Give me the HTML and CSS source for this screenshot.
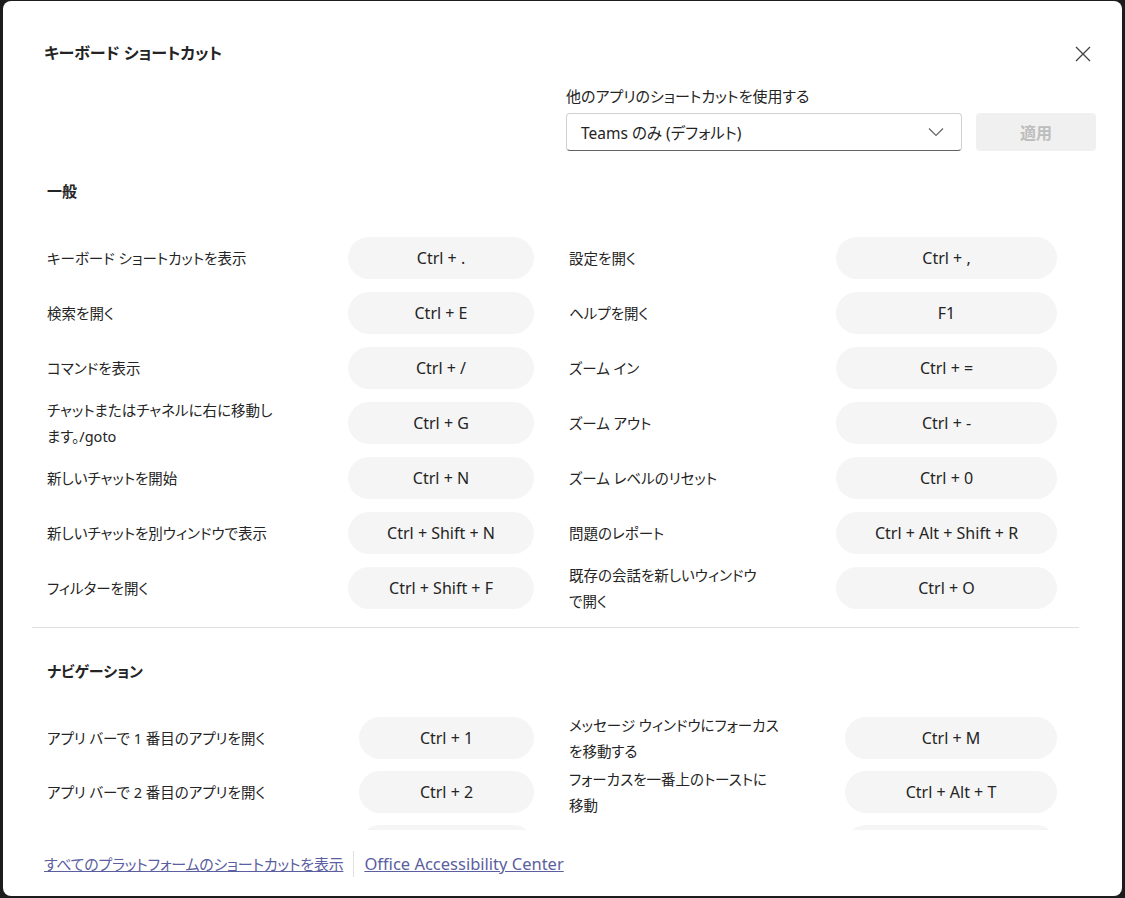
FILE: index.html
```html
<!DOCTYPE html>
<html lang="ja">
<head>
    <meta charset="UTF-8">
    <meta name="viewport" content="width=device-width, initial-scale=1.0">
    <title>キーボード ショートカット</title>
    <link rel="stylesheet" href="styles.css">
</head>
<body>
    <div class="dialog">
        <div class="header">
            <h1 class="title">キーボード ショートカット</h1>
            <button class="close" aria-label="閉じる">
                <svg width="16" height="16" viewBox="0 0 16 16"><path d="M1 1 L15 15 M15 1 L1 15" stroke="#424242" stroke-width="1.3" fill="none"/></svg>
            </button>
        </div>

        <div class="preset">
            <div class="preset-label">他のアプリのショートカットを使用する</div>
            <div class="preset-controls">
                <div class="select">
                    <span>Teams のみ (デフォルト)</span>
                    <svg width="16" height="10" viewBox="0 0 16 10"><path d="M1 1.5 L8 8.5 L15 1.5" stroke="#616161" stroke-width="1.1" fill="none"/></svg>
                </div>
                <button class="btn-apply" disabled>適用</button>
            </div>
        </div>

        <div class="scroll">
            <div class="section general">
                <h2>一般</h2>
                <div class="rows">
                    <div class="row">
                        <div class="item"><span class="label">キーボード ショートカットを表示</span><span class="key">Ctrl + .</span></div>
                        <div class="item"><span class="label">設定を開く</span><span class="key">Ctrl + ,</span></div>
                    </div>
                    <div class="row">
                        <div class="item"><span class="label">検索を開く</span><span class="key">Ctrl + E</span></div>
                        <div class="item"><span class="label">ヘルプを開く</span><span class="key">F1</span></div>
                    </div>
                    <div class="row">
                        <div class="item"><span class="label">コマンドを表示</span><span class="key">Ctrl + /</span></div>
                        <div class="item"><span class="label">ズーム イン</span><span class="key">Ctrl + =</span></div>
                    </div>
                    <div class="row">
                        <div class="item"><span class="label">チャットまたはチャネルに右に移動し<br>ます。/goto</span><span class="key">Ctrl + G</span></div>
                        <div class="item"><span class="label">ズーム アウト</span><span class="key">Ctrl + -</span></div>
                    </div>
                    <div class="row">
                        <div class="item"><span class="label">新しいチャットを開始</span><span class="key">Ctrl + N</span></div>
                        <div class="item"><span class="label">ズーム レベルのリセット</span><span class="key">Ctrl + 0</span></div>
                    </div>
                    <div class="row">
                        <div class="item"><span class="label">新しいチャットを別ウィンドウで表示</span><span class="key">Ctrl + Shift + N</span></div>
                        <div class="item"><span class="label">問題のレポート</span><span class="key">Ctrl + Alt + Shift + R</span></div>
                    </div>
                    <div class="row">
                        <div class="item"><span class="label">フィルターを開く</span><span class="key">Ctrl + Shift + F</span></div>
                        <div class="item"><span class="label">既存の会話を新しいウィンドウ<br>で開く</span><span class="key">Ctrl + O</span></div>
                    </div>
                </div>
            </div>

            <div class="section nav">
                <h2>ナビゲーション</h2>
                <div class="rows">
                    <div class="row">
                        <div class="item"><span class="label">アプリ バーで 1 番目のアプリを開く</span><span class="key">Ctrl + 1</span></div>
                        <div class="item"><span class="label">メッセージ ウィンドウにフォーカス<br>を移動する</span><span class="key">Ctrl + M</span></div>
                    </div>
                    <div class="row">
                        <div class="item"><span class="label">アプリ バーで 2 番目のアプリを開く</span><span class="key">Ctrl + 2</span></div>
                        <div class="item"><span class="label">フォーカスを一番上のトーストに<br>移動</span><span class="key">Ctrl + Alt + T</span></div>
                    </div>
                    <!-- next row, scrolled out of view -->
                    <div class="row">
                        <div class="item"><span class="label"></span><span class="key"></span></div>
                        <div class="item"><span class="label"></span><span class="key"></span></div>
                    </div>
                </div>
            </div>
        </div>

        <div class="footer">
            <a href="#" class="link-ja">すべてのプラットフォームのショートカットを表示</a>
            <span class="sep"></span>
            <a href="#" class="link-en">Office Accessibility Center</a>
        </div>
    </div>
</body>
</html>
```

FILE: styles.css
```css
* {
    margin: 0;
    padding: 0;
    box-sizing: border-box;
}

body {
    font-family: "Segoe UI", "Noto Sans", "Noto Sans CJK JP", sans-serif;
    font-feature-settings: "palt";
    color: #242424;
    background: #1c1c1c;
    height: 898px;
    overflow: hidden;
}

.dialog {
    margin: 1px 3px 0 3px;
    height: 895px;
    background: #fff;
    border-radius: 8px;
    display: flex;
    flex-direction: column;
}

.header {
    display: flex;
    justify-content: space-between;
    align-items: center;
    padding: 40px 31px 0 41px;
}

.title {
    font-size: 16px;
    font-weight: 600;
    line-height: 24px;
}

.close {
    border: none;
    background: none;
    width: 16px;
    height: 16px;
    display: flex;
    margin-top: 2px;
}

.preset {
    align-self: flex-end;
    padding-right: 26px;
    margin-top: 21px;
}

.preset-label {
    font-size: 15px;
    line-height: 20px;
    margin-bottom: 7px;
}

.preset-controls {
    display: flex;
    gap: 14px;
}

.select {
    width: 396px;
    height: 38px;
    border: 1px solid #d1d1d1;
    border-bottom-color: #616161;
    border-radius: 4px;
    display: flex;
    align-items: center;
    justify-content: space-between;
    padding: 0 17px 0 14px;
    font-size: 15.5px;
}

.btn-apply {
    width: 120px;
    height: 38px;
    border: none;
    border-radius: 4px;
    background: #f0f0f0;
    color: #bdbdbd;
    font-family: inherit;
    font-size: 16px;
    font-weight: 600;
}

.scroll {
    height: 679px;
    overflow: hidden;
    margin: 0 43px 0 29px;
}

.section {
    padding: 29px 21px 18px 15px;
}

.section + .section {
    border-top: 1px solid #e0e0e0;
}

.section h2 {
    font-size: 15px;
    font-weight: 700;
    line-height: 22px;
    margin-bottom: 35px;
}

.nav h2 {
    margin-top: 3px;
}

.rows {
    display: flex;
    flex-direction: column;
    gap: 13px;
}

.nav .rows {
    gap: 12px;
}

.row {
    display: grid;
    grid-template-columns: 487px 488px;
    grid-template-rows: 42px;
    column-gap: 35px;
    height: 42px;
    min-height: 0;
    flex-shrink: 0;
}

.item {
    display: flex;
    align-items: center;
    justify-content: space-between;
    min-height: 0;
}

.label {
    font-size: 14.5px;
    line-height: 26px;
    white-space: nowrap;
}

.key {
    height: 42px;
    border-radius: 21px;
    background: #f5f5f5;
    display: flex;
    align-items: center;
    justify-content: center;
    font-size: 16px;
    flex-shrink: 0;
}

.general .item:first-child .key { width: 186px; }
.general .item:last-child .key { width: 221px; }
.nav .item:first-child .key { width: 175px; }
.nav .item:last-child .key { width: 212px; }

.footer {
    display: flex;
    align-items: center;
    gap: 10px;
    padding: 21px 0 0 41px;
}

.footer a {
    color: #5b5e9f;
    line-height: 20px;
}

.link-ja {
    font-size: 15px;
    letter-spacing: -0.25px;
}

.link-en {
    font-size: 16.5px;
}

.sep {
    width: 1px;
    height: 26px;
    background: #e0e0e0;
}
```
